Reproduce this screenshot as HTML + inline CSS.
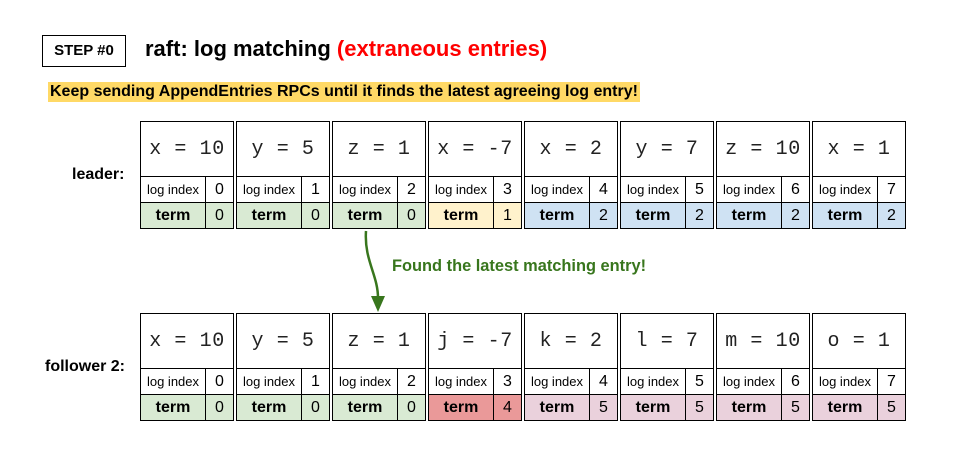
<!DOCTYPE html>
<html><head><style>
body{margin:0;width:973px;height:456px;background:#fff;position:relative;font-family:"Liberation Sans",sans-serif;overflow:hidden}
.a{position:absolute}
.cell{position:absolute;width:92px;border:1px solid #000;box-sizing:content-box}
.top{height:54px;border-bottom:1px solid #000;font-family:"Liberation Mono",monospace;font-size:20px;letter-spacing:0.6px;text-align:center;line-height:56px;white-space:pre;color:#222}
.row{display:flex;height:25px;line-height:25px}
.row div{text-align:center}
.row .l{width:64px;border-right:1px solid #000}
.row .n{flex:1}
.ix{border-bottom:1px solid #000;font-size:13px}
.ix .n{font-size:16px}
.tm{font-size:16px}
.tm .l{font-weight:bold}
</style></head><body>
<div class="a" style="left:42px;top:35px;width:82px;height:30px;border:1.5px solid #000;font-weight:bold;font-size:15px;line-height:30px;text-align:center">STEP #0</div>
<div class="a" style="left:145px;top:36px;font-size:22px;font-weight:bold">raft: log matching <span style="color:#f00">(extraneous entries)</span></div>
<div class="a" style="left:48px;top:82px;width:592px;height:20px;background:#ffd966;font-weight:bold;font-size:16px;line-height:20px;padding-left:2px;box-sizing:border-box;white-space:nowrap">Keep sending AppendEntries RPCs until it finds the latest agreeing log entry!</div>
<div class="a" style="left:72px;top:166px;font-weight:bold;font-size:16px">leader:</div>
<div class="a" style="left:45px;top:358px;font-weight:bold;font-size:16px">follower 2:</div>
<div class="a" style="left:392px;top:257px;color:#38761d;font-weight:bold;font-size:16.4px">Found the latest matching entry!</div>
<svg class="a" style="left:0;top:0" width="973" height="456"><path d="M366 231 C364 260,378 275,378 298" stroke="#38761d" stroke-width="2.5" fill="none"/><path d="M371 296 L385 296 L378 312 Z" fill="#38761d"/></svg>
<script>
function mk(top,vals,terms,cols){let h='';for(let i=0;i<8;i++){h+=`<div class="cell" style="left:${140+i*96}px;top:${top}px"><div class="top">${vals[i]}</div><div class="row ix"><div class="l">log index</div><div class="n">${i}</div></div><div class="row tm" style="background:${cols[i]}"><div class="l">term</div><div class="n">${terms[i]}</div></div></div>`}document.body.insertAdjacentHTML('beforeend',h)}
const G='#d9ead3',Y='#fff2cc',B='#cfe2f3',R='#ea9999',P='#ead1dc';
mk(121,['x = 10','y = 5','z = 1','x = -7','x = 2','y = 7','z = 10','x = 1'],[0,0,0,1,2,2,2,2],[G,G,G,Y,B,B,B,B]);
mk(313,['x = 10','y = 5','z = 1','j = -7','k = 2','l = 7','m = 10','o = 1'],[0,0,0,4,5,5,5,5],[G,G,G,R,P,P,P,P]);
</script>
</body></html>
